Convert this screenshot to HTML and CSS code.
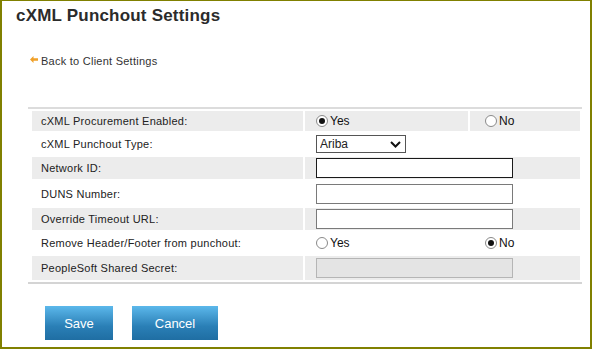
FILE: index.html
```html
<!DOCTYPE html>
<html>
<head>
    <title>cXML Punchout Settings</title>
    <link rel="stylesheet" href="styles.css">
</head>
<body>
    <div class="page">
        <h1 class="title">cXML Punchout Settings</h1>

        <a class="back-link" href="#">
            <svg class="back-arrow" width="8" height="7" viewBox="0 0 8 7">
                <polygon points="0,3.5 3.5,0 3.5,2.2 8,2.2 8,4.8 3.5,4.8 3.5,7" fill="#f0a028"/>
            </svg>
            Back to Client Settings
        </a>

        <div class="settings">
            <table class="settings-table">
                <tr class="row-shaded r1">
                    <td class="label">cXML Procurement Enabled:</td>
                    <td class="value"><label class="radio"><input type="radio" name="enabled" checked> Yes</label></td>
                    <td class="value value-no"><label class="radio"><input type="radio" name="enabled"> No</label></td>
                </tr>
                <tr class="r2">
                    <td class="label">cXML Punchout Type:</td>
                    <td class="value" colspan="2">
                        <span class="select-wrap">
                            <select class="select">
                                <option>Ariba</option>
                            </select>
                            <svg class="chevron" width="11" height="7" viewBox="0 0 11 7">
                                <polyline points="1,1 5.5,5.5 10,1" fill="none" stroke="#111" stroke-width="2"/>
                            </svg>
                        </span>
                    </td>
                </tr>
                <tr class="row-shaded r3">
                    <td class="label">Network ID:</td>
                    <td class="value" colspan="2"><input class="text-input focused" type="text"></td>
                </tr>
                <tr class="r4">
                    <td class="label">DUNS Number:</td>
                    <td class="value" colspan="2"><input class="text-input" type="text"></td>
                </tr>
                <tr class="row-shaded r5">
                    <td class="label">Override Timeout URL:</td>
                    <td class="value" colspan="2"><input class="text-input" type="text"></td>
                </tr>
                <tr class="r6">
                    <td class="label">Remove Header/Footer from punchout:</td>
                    <td class="value"><label class="radio"><input type="radio" name="header"> Yes</label></td>
                    <td class="value value-no"><label class="radio"><input type="radio" name="header" checked> No</label></td>
                </tr>
                <tr class="row-shaded r7">
                    <td class="label">PeopleSoft Shared Secret:</td>
                    <td class="value" colspan="2"><input class="text-input" type="text" disabled></td>
                </tr>
            </table>
        </div>

        <div class="actions">
            <button class="btn btn-save">Save</button>
            <button class="btn btn-cancel">Cancel</button>
        </div>
    </div>
</body>
</html>
```

FILE: styles.css
```css
body {
    margin: 0;
    font-family: "Liberation Sans", Arial, sans-serif;
    color: #222;
    background: #fff;
}
.page {
    width: 588px;
    height: 346px;
    border-top: 1px solid #808000;
    border-left: 2px solid #808000;
    border-right: 2px solid #808000;
    border-bottom: 2px solid #808000;
    overflow: hidden;
}
.title {
    margin: 5px 0 0 14px;
    font-size: 17px;
    line-height: 20px;
    font-weight: bold;
    color: #2b2b2b;
    letter-spacing: 0.2px;
}
.back-link {
    display: flex;
    align-items: center;
    margin: 29px 0 0 28px;
    font-size: 11px;
    letter-spacing: 0.25px;
    color: #333;
    text-decoration: none;
    width: max-content;
}
.back-arrow {
    margin: -4px 3px 0 0;
}
.settings {
    margin: 40px 8px 0 26px;
    padding: 0 0 0 2px;
    border-top: 2px solid #dcdcdc;
    border-bottom: 2px solid #d4d4d4;
}
.settings-table {
    border-spacing: 2px;
    width: 554px;
    margin-left: -2px;
    padding-left: 2px;
}
.settings-table td {
    padding: 0;
    font-size: 11px;
    letter-spacing: 0.25px;
}
.row-shaded td {
    background: #ececec;
}
.label {
    width: 262px;
    padding-left: 9px !important;
}
.value {
    padding-left: 11px !important;
}
.value-no {
    width: 95px;
    padding-left: 15px !important;
}
.r1 td { height: 20px; }
.r2 td { height: 22px; }
.r3 td { height: 22px; }
.r4 td { height: 25px; }
.r5 td { height: 22px; }
.r6 td { height: 22px; }
.r7 td { height: 24px; }

.radio {
    display: flex;
    align-items: center;
    gap: 2px;
    font-size: 12px;
    letter-spacing: 0;
    color: #111;
}
.radio input {
    appearance: none;
    -webkit-appearance: none;
    margin: 0;
    width: 12px;
    height: 12px;
    border: 1px solid #8a8a8a;
    border-radius: 50%;
    background: #fff;
    position: relative;
}
.radio input:checked::after {
    content: "";
    position: absolute;
    left: 2px;
    top: 2px;
    width: 6px;
    height: 6px;
    border-radius: 50%;
    background: #111;
}
.select-wrap {
    position: relative;
    display: inline-block;
    vertical-align: middle;
}
.select {
    appearance: none;
    -webkit-appearance: none;
    display: block;
    width: 90px;
    height: 18px;
    margin: 0;
    padding: 0 0 0 3px;
    border: 1px solid #555;
    border-radius: 0;
    background: #fff;
    font-family: "Liberation Sans", Arial, sans-serif;
    font-size: 12px;
    color: #222;
}
.chevron {
    position: absolute;
    right: 5px;
    top: 6px;
}
.text-input {
    display: block;
    box-sizing: border-box;
    width: 197px;
    height: 20px;
    margin: 0;
    border: 1px solid #7a7a7a;
    border-radius: 0;
    background: #fff;
}
.text-input.focused {
    border-color: #1a1a1a;
}
.text-input:disabled {
    background: #e4e4e4;
    border-color: #b5b5b5;
}
.actions {
    display: flex;
    gap: 19px;
    margin: 22px 0 0 43px;
}
.btn {
    height: 34px;
    border: none;
    border-radius: 0;
    padding: 0;
    color: #fff;
    font-family: "Liberation Sans", Arial, sans-serif;
    font-size: 13px;
    background: linear-gradient(#5cb8eb, #2a7fb6 60%, #1f6ea3);
    cursor: pointer;
}
.btn-save {
    width: 68px;
}
.btn-cancel {
    width: 86px;
}
```
